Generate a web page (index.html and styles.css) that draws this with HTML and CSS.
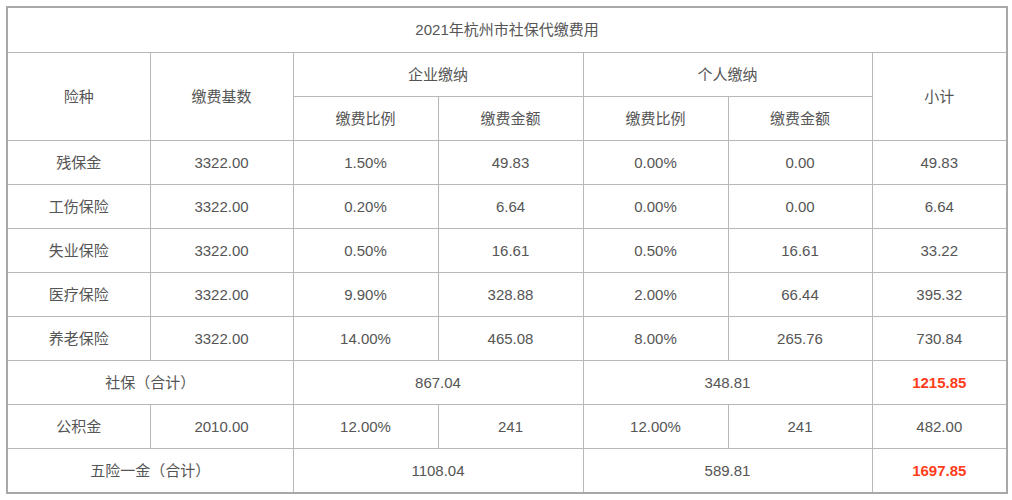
FILE: index.html
```html
<!DOCTYPE html>
<html lang="zh">
<head>
<meta charset="utf-8">
<link rel="stylesheet" href="styles.css">
</head>
<body>
<table class="fee">
  <colgroup>
    <col class="c1"><col class="c2"><col class="c3"><col class="c4"><col class="c5"><col class="c6"><col class="c7">
  </colgroup>
  <tr class="title"><td colspan="7">2021年杭州市社保代缴费用</td></tr>
  <tr><td rowspan="2">险种</td><td rowspan="2">缴费基数</td><td colspan="2">企业缴纳</td><td colspan="2">个人缴纳</td><td rowspan="2">小计</td></tr>
  <tr><td>缴费比例</td><td>缴费金额</td><td>缴费比例</td><td>缴费金额</td></tr>
  <tr><td>残保金</td><td>3322.00</td><td>1.50%</td><td>49.83</td><td>0.00%</td><td>0.00</td><td>49.83</td></tr>
  <tr><td>工伤保险</td><td>3322.00</td><td>0.20%</td><td>6.64</td><td>0.00%</td><td>0.00</td><td>6.64</td></tr>
  <tr><td>失业保险</td><td>3322.00</td><td>0.50%</td><td>16.61</td><td>0.50%</td><td>16.61</td><td>33.22</td></tr>
  <tr><td>医疗保险</td><td>3322.00</td><td>9.90%</td><td>328.88</td><td>2.00%</td><td>66.44</td><td>395.32</td></tr>
  <tr><td>养老保险</td><td>3322.00</td><td>14.00%</td><td>465.08</td><td>8.00%</td><td>265.76</td><td>730.84</td></tr>
  <tr><td colspan="2">社保（合计）</td><td colspan="2">867.04</td><td colspan="2">348.81</td><td class="total">1215.85</td></tr>
  <tr><td>公积金</td><td>2010.00</td><td>12.00%</td><td>241</td><td>12.00%</td><td>241</td><td>482.00</td></tr>
  <tr class="last"><td colspan="2">五险一金（合计）</td><td colspan="2">1108.04</td><td colspan="2">589.81</td><td class="total">1697.85</td></tr>
</table>
</body>
</html>
```
FILE: styles.css
```css
html, body {
  margin: 0;
  padding: 0;
  background: #fff;
}
body {
  padding: 6px 0 0 6px;
  font-family: "Liberation Sans", "Noto Sans CJK SC", sans-serif;
  font-size: 15px;
  color: #555;
}
.fee {
  border-collapse: collapse;
  table-layout: fixed;
  width: 1000px;
  border: 2px solid #a8a8a8;
}
.c1 { width: 143px; }
.c2 { width: 143px; }
.c3 { width: 145px; }
.c4 { width: 145px; }
.c5 { width: 145px; }
.c6 { width: 144px; }
.c7 { width: 135px; }
.fee td {
  border: 1px solid #b8b8b8;
  text-align: center;
  vertical-align: middle;
  padding: 0;
  height: 43px;
  line-height: 20px;
}
.fee tr.title td {
  height: 44px;
}
.fee td.total {
  color: #ff3d1a;
  font-weight: bold;
}
```
